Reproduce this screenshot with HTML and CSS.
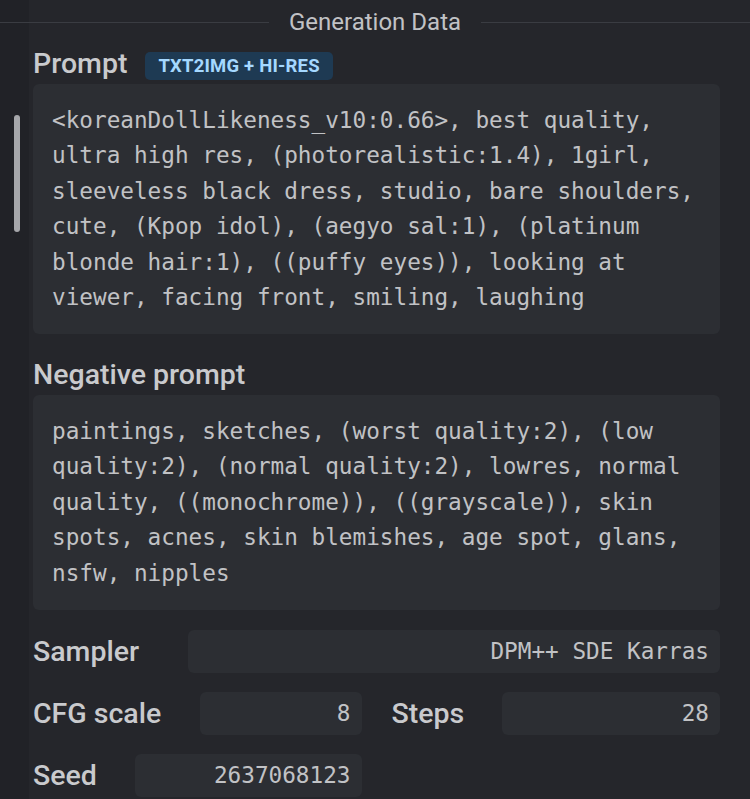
FILE: index.html
```html
<!DOCTYPE html>
<html lang="en">
<head>
<meta charset="utf-8">
<title>Generation Data</title>
<link rel="stylesheet" href="styles.css">
</head>
<body>
<div class="panel">
  <div class="scroll-track"><div class="scroll-thumb"></div></div>
  <div class="divider">
    <span class="divider-line"></span>
    <span class="divider-label">Generation Data</span>
    <span class="divider-line"></span>
  </div>

  <div class="title-row">
    <span class="title">Prompt</span>
    <span class="badge">TXT2IMG + HI-RES</span>
  </div>
  <div class="code-box">&lt;koreanDollLikeness_v10:0.66&gt;, best quality, ultra high res, (photorealistic:1.4), 1girl, sleeveless black dress, studio, bare shoulders, cute, (Kpop idol), (aegyo sal:1), (platinum blonde hair:1), ((puffy eyes)), looking at viewer, facing front, smiling, laughing</div>

  <div class="title-row title-row--spaced">
    <span class="title">Negative prompt</span>
  </div>
  <div class="code-box">paintings, sketches, (worst quality:2), (low quality:2), (normal quality:2), lowres, normal quality, ((monochrome)), ((grayscale)), skin spots, acnes, skin blemishes, age spot, glans, nsfw, nipples</div>

  <div class="fields">
    <div class="field-row">
      <div class="field">
        <span class="field-label label-sampler">Sampler</span>
        <span class="field-input">DPM++ SDE Karras</span>
      </div>
    </div>
    <div class="field-row">
      <div class="field">
        <span class="field-label label-cfg">CFG scale</span>
        <span class="field-input">8</span>
      </div>
      <div class="field">
        <span class="field-label label-steps">Steps</span>
        <span class="field-input">28</span>
      </div>
    </div>
    <div class="field-row">
      <div class="field">
        <span class="field-label label-seed">Seed</span>
        <span class="field-input">2637068123</span>
      </div>
      <div class="field field--empty"></div>
    </div>
  </div>
</div>
</body>
</html>
```

FILE: styles.css
```css
html, body {
  margin: 0;
  padding: 0;
  background: #25262b;
  height: 100%;
  overflow: hidden;
}

body {
  font-family: Roboto, "Noto Sans", sans-serif;
  color: #c1c2c5;
}

.panel {
  position: relative;
  padding: 0 30px 0 33px;
}

.scroll-track {
  position: absolute;
  left: 0;
  top: 0;
  width: 29px;
  height: 799px;
  background: #212227;
}

.scroll-thumb {
  position: absolute;
  left: 14px;
  top: 115px;
  width: 6px;
  height: 117px;
  border-radius: 3px;
  background: #a6a7ab;
}

.divider {
  position: relative;
  display: flex;
  align-items: center;
  height: 44px;
  margin: 0 -30px 0 -33px;
}

.divider-line {
  flex: 1;
  height: 1px;
  background: #3a3c42;
}

.divider-label {
  padding: 0 20px;
  font-size: 24px;
  color: #c1c2c5;
  line-height: 1;
}

.title-row {
  display: flex;
  align-items: center;
  height: 40px;
  gap: 18px;
}

.title-row--spaced {
  margin-top: 21px;
}

.title {
  font-size: 28.5px;
  font-weight: 500;
  color: #c9cacd;
  line-height: 1;
}

.badge {
  margin-top: 4px;
  height: 28px;
  padding: 0 13px;
  display: inline-flex;
  align-items: center;
  border-radius: 5px;
  background: #1e3a53;
  color: #a5d8ff;
  font-size: 18.5px;
  font-weight: 700;
  letter-spacing: 0.2px;
}

.code-box {
  background: #2c2e33;
  border-radius: 6px;
  padding: 18.5px 19px;
  font-family: "DejaVu Sans Mono", "Liberation Mono", monospace;
  font-size: 22.7px;
  line-height: 35.5px;
  color: #c1c2c5;
  word-wrap: break-word;
}

.fields {
  margin-top: 20px;
  display: flex;
  flex-direction: column;
  gap: 19px;
}

.field-row {
  display: flex;
  gap: 30px;
}

.field {
  flex: 1;
  display: flex;
  align-items: center;
}

.field-label {
  flex: none;
  font-size: 28.5px;
  font-weight: 500;
  color: #c9cacd;
}

.label-sampler { width: 155px; }
.label-cfg { width: 167px; }
.label-steps { width: 110px; }
.label-seed { width: 102px; }

.field-input {
  flex: 1;
  height: 43px;
  display: flex;
  align-items: center;
  justify-content: flex-end;
  padding: 0 11px;
  background: #2c2e33;
  border-radius: 6px;
  font-family: "DejaVu Sans Mono", "Liberation Mono", monospace;
  font-size: 22.7px;
  color: #c1c2c5;
}
```
